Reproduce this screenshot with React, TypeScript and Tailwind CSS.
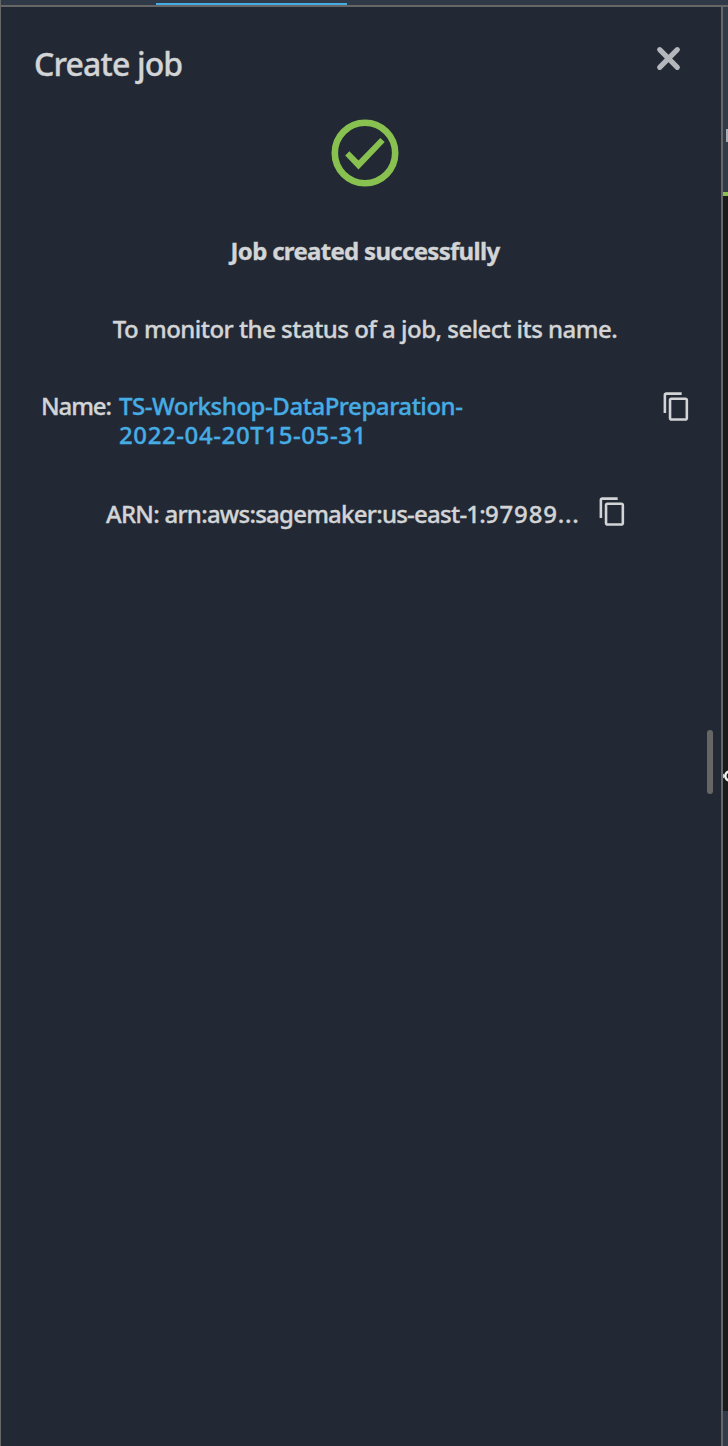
import React from "react";

function CopyIcon({ className = "" }: { className?: string }) {
  return (
    <svg viewBox="0 0 24 24" className={`h-[31px] w-[31px] shrink-0 fill-[#d2d4d6] ${className}`}>
      <path d="M16 1H4c-1.1 0-2 .9-2 2v14h2V3h12V1zm3 4H8c-1.1 0-2 .9-2 2v14c0 1.1.9 2 2 2h11c1.1 0 2-.9 2-2V7c0-1.1-.9-2-2-2zm0 16H8V7h11v14z" />
    </svg>
  );
}

function SuccessIcon() {
  return (
    <svg viewBox="0 0 68 68" className="h-[68px] w-[68px] shrink-0">
      <circle cx="34" cy="34" r="30.2" fill="none" stroke="#88c150" strokeWidth="6.6" />
      <path d="M14.2 36.6l4.1-4.3 9.2 9.2L49.3 19l4.4 4-26.2 27.5z" fill="#88c150" />
    </svg>
  );
}

export default function App() {
  return (
    <div className="flex h-[1446px] w-[728px] flex-col overflow-hidden bg-[#222934] font-['Noto_Sans',sans-serif] font-medium text-[#d2d4d6] [-webkit-text-stroke:0.35px]">
      <div className="flex h-[5px] shrink-0 border-l border-[#666] bg-[#303948] pl-[155px]">
        <div className="mt-[3px] h-[2px] w-[191px] bg-[#46ace4]" />
      </div>
      <div className="h-[2px] shrink-0 bg-[#666]" />
      <div className="flex min-h-0 flex-1">
        <main className="relative flex w-[723px] shrink-0 flex-col border-r-2 border-l border-[#666]">
          <header className="flex h-[112px] shrink-0 items-start justify-between pr-[40px] pl-[33px]">
            <h1 className="mt-[37px] text-[32px] leading-[40px] tracking-[-0.85px] whitespace-nowrap">Create job</h1>
            <button aria-label="Close" className="mt-[39px]">
              <svg viewBox="0 0 25 25" className="h-[25px] w-[25px]">
                <path d="M3.700 3.700l17.600 17.600M21.300 3.700L3.700 21.300" stroke="#b4b7bb" strokeWidth="5.2" strokeLinecap="round" />
              </svg>
            </button>
          </header>
          <div className="flex h-[68px] shrink-0 justify-center pl-[8px]">
            <SuccessIcon />
          </div>
          <h2 className="mt-[48px] shrink-0 pl-[8px] text-center text-[24px] leading-[32px] font-bold tracking-[-0.7px]">Job created successfully</h2>
          <p className="mt-[46px] shrink-0 pl-[8px] text-center text-[24px] leading-[32px] tracking-[-0.52px] whitespace-nowrap">
            To monitor the status of a job, select its name.
          </p>
          <div className="mt-[46px] flex h-[60px] shrink-0 pl-[40px] text-[24px] leading-[29px]">
            <span className="w-[78px] shrink-0 tracking-[-1.1px]">Name:</span>
            <a className="w-[542px] text-[#46ace4]">
              <span className="block tracking-[-0.45px] whitespace-nowrap">TS-Workshop-DataPreparation-</span>
              <span className="block tracking-[0.6px] whitespace-nowrap">2022-04-20T15-05-31</span>
            </a>
            <CopyIcon />
          </div>
          <div className="mt-[43px] flex h-[40px] shrink-0 pl-[105px] text-[24px] leading-[40px]">
            <span className="w-[491px] shrink-0 tracking-[-0.76px] whitespace-nowrap">
              ARN: arn:aws:sagemaker:us-east-1:<span className="tracking-[0.8px]">97989...</span>
            </span>
            <CopyIcon className="mt-[2px]" />
          </div>
          <div className="absolute top-[723px] right-[8px] h-[64px] w-[6px] rounded-full bg-[#666]" />
        </main>
        <aside className="flex w-[5px] shrink-0 flex-col">
          <div className="flex h-[185px] shrink-0 justify-end bg-[#303b4a] pt-[122px]">
            <div className="h-[13px] w-[2px] bg-[#a7acb5]" />
          </div>
          <div className="h-[4px] shrink-0 bg-[#88c150]" />
          <div className="flex flex-1 flex-col bg-[#181a1b] pt-[572px]">
            <svg viewBox="0 0 5 16" className="h-[16px] w-[5px]">
              <path d="M0 5.500l2.500 2.500L0 10.500z" fill="#d2d4d6" />
              <circle cx="7" cy="8" r="4.700" fill="none" stroke="#f4f4f4" strokeWidth="2.400" />
            </svg>
          </div>
          <div className="h-[35px] shrink-0 bg-[#323b4a]" />
        </aside>
      </div>
    </div>
  );
}
